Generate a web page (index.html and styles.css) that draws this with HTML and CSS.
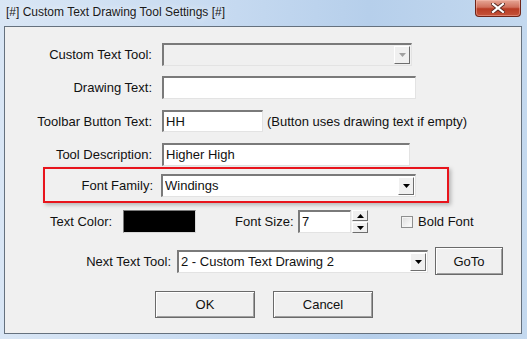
FILE: index.html
```html
<!DOCTYPE html>
<html lang="en">
<head>
  <meta charset="UTF-8">
  <meta name="viewport" content="width=device-width, initial-scale=1.0">
  <title>Custom Text Drawing Tool Settings</title>
  <link rel="stylesheet" href="styles.css">
</head>
<body>
  <div class="window">
    <div class="titlebar">
      <span class="title">[#] Custom Text Drawing Tool Settings [#]</span>
      <button class="close" aria-label="Close">
        <svg width="14" height="10" viewBox="0 0 14 10">
          <path d="M2 1 L12 9 M12 1 L2 9" stroke="#5a2a22" stroke-width="4" stroke-linecap="square"/>
          <path d="M2 1 L12 9 M12 1 L2 9" stroke="#ffffff" stroke-width="2.2" stroke-linecap="square"/>
        </svg>
      </button>
    </div>

    <div class="client">
      <div class="row row-tool">
        <label class="label">Custom Text Tool:</label>
        <div class="combo disabled w-tool">
          <span class="combo-text"></span>
          <span class="drop"><svg width="7" height="4" viewBox="0 0 7 4"><polygon points="0,0 7,0 3.5,4" fill="#a0a0a0"/></svg></span>
        </div>
      </div>

      <div class="row row-drawing">
        <label class="label">Drawing Text:</label>
        <div class="field w-drawing"></div>
      </div>

      <div class="row row-toolbar">
        <label class="label">Toolbar Button Text:</label>
        <div class="field w-toolbar">HH</div>
        <span class="note">(Button uses drawing text if empty)</span>
      </div>

      <div class="row row-desc">
        <label class="label">Tool Description:</label>
        <div class="field w-desc">Higher High</div>
      </div>

      <div class="highlight">
        <label class="label label-font">Font Family:</label>
        <div class="combo w-font">
          <span class="combo-text">Windings</span>
          <span class="drop"><svg width="7" height="4" viewBox="0 0 7 4"><polygon points="0,0 7,0 3.5,4" fill="#000"/></svg></span>
        </div>
      </div>

      <div class="row row-style">
        <label class="color-label">Text Color:</label>
        <div class="swatch"></div>
        <label class="size-label">Font Size:</label>
        <div class="field w-size">7</div>
        <div class="spin">
          <span class="spin-btn"><svg width="7" height="4" viewBox="0 0 7 4"><polygon points="0,4 7,4 3.5,0" fill="#000"/></svg></span>
          <span class="spin-btn"><svg width="7" height="4" viewBox="0 0 7 4"><polygon points="0,0 7,0 3.5,4" fill="#000"/></svg></span>
        </div>
        <span class="checkbox"></span>
        <span class="check-text">Bold Font</span>
      </div>

      <div class="row row-next">
        <label class="label label-next">Next Text Tool:</label>
        <div class="combo w-next">
          <span class="combo-text">2 - Custom Text Drawing 2</span>
          <span class="drop"><svg width="7" height="4" viewBox="0 0 7 4"><polygon points="0,0 7,0 3.5,4" fill="#000"/></svg></span>
        </div>
        <button class="button goto">GoTo</button>
      </div>

      <div class="row row-actions">
        <button class="button action ok">OK</button>
        <button class="button action cancel">Cancel</button>
      </div>
    </div>
  </div>
</body>
</html>
```

FILE: styles.css
```css
body {
  margin: 0;
  font-family: "Liberation Sans", Arial, sans-serif;
  font-size: 13px;
  color: #111;
}

.window {
  width: 527px;
  height: 339px;
  box-sizing: border-box;
  padding: 0 5px 5px 4px;
  display: flex;
  flex-direction: column;
  background: linear-gradient(to right, #d9e6f5, #c8dbf1 40%, #b6cfeb 70%, #c4d9ef);
}

.titlebar {
  height: 26px;
  display: flex;
  justify-content: space-between;
  align-items: flex-start;
}

.title {
  margin: 5px 0 0 2px;
  font-size: 12px;
  color: #1a1a1a;
  text-shadow: 0 0 6px rgba(255, 255, 255, 0.9);
}

.close {
  width: 46px;
  height: 17px;
  margin-right: 1px;
  padding: 0;
  border: 1px solid #6e2418;
  border-top: none;
  border-radius: 0 0 4px 4px;
  background: linear-gradient(#e6a796, #d0705c 45%, #b83c24 55%, #c5533a);
  box-shadow: inset 0 0 0 1px rgba(255, 200, 190, 0.4);
  display: flex;
  align-items: center;
  justify-content: center;
}

.client {
  flex: 1;
  background: #f0f0f0;
  border: 1px solid #65717e;
  display: flex;
  flex-direction: column;
}

.row {
  display: flex;
  align-items: center;
}

.label {
  width: 147px;
  margin-right: 10px;
  text-align: right;
  white-space: nowrap;
}

.row-tool { margin-top: 16px; height: 23px; }
.row-drawing { margin-top: 10px; height: 23px; }
.row-toolbar { margin-top: 11px; height: 22px; }
.row-desc { margin-top: 11px; height: 23px; }

.field,
.combo {
  box-sizing: border-box;
  height: 23px;
  background: #fff;
  border-style: solid;
  border-width: 2px 1px 1px 2px;
  border-color: #7a7a7a #e3e3e3 #e3e3e3 #7a7a7a;
  padding: 0 2px;
  line-height: 19px;
  white-space: nowrap;
}

.w-drawing { width: 254px; }
.w-toolbar { width: 101px; height: 22px; line-height: 19px; }
.w-desc { width: 248px; }

.note {
  margin-left: 4px;
}

.combo {
  display: flex;
  padding: 0 1px 0 2px;
}

.combo-text {
  flex: 1;
  overflow: hidden;
}

.drop {
  width: 16px;
  margin: 1px 0;
  box-sizing: border-box;
  background: #f0f0f0;
  border-style: solid;
  border-width: 1px;
  border-color: #ffffff #6e6e6e #6e6e6e #ffffff;
  display: flex;
  align-items: center;
  justify-content: center;
}

.combo.disabled {
  background: #f0f0f0;
}

.w-tool { width: 250px; }
.w-font { width: 255px; }
.w-next { width: 251px; }

.highlight {
  margin: 1px 0 0 38px;
  width: 406px;
  height: 36px;
  box-sizing: border-box;
  border: 2px solid #e8141c;
  box-shadow: 2px 2px 4px rgba(0, 0, 0, 0.25);
  display: flex;
  align-items: flex-start;
  padding-top: 5px;
}

.label-font {
  width: 108px;
  margin-right: 8px;
  line-height: 23px;
}

.row-style {
  margin-top: 7px;
  height: 23px;
}

.color-label {
  width: 65px;
  margin: 0 8px 0 45px;
  white-space: nowrap;
}

.swatch {
  width: 73px;
  height: 23px;
  box-sizing: border-box;
  background: #000;
  border-style: solid;
  border-width: 1px;
  border-color: #7a7a7a #d8d8d8 #d8d8d8 #7a7a7a;
}

.size-label {
  width: 57px;
  margin: 0 6px 0 39px;
  white-space: nowrap;
}

.w-size {
  width: 53px;
}

.spin {
  margin-left: 1px;
  width: 16px;
  height: 23px;
  display: flex;
  flex-direction: column;
  gap: 1px;
}

.spin-btn {
  flex: 1;
  box-sizing: border-box;
  background: #f0f0f0;
  border-style: solid;
  border-width: 1px;
  border-color: #ffffff #6e6e6e #6e6e6e #ffffff;
  display: flex;
  align-items: center;
  justify-content: center;
}

.checkbox {
  width: 12px;
  height: 12px;
  margin-left: 33px;
  box-sizing: border-box;
  border: 1px solid #8e8f8f;
  background: linear-gradient(135deg, #dcdcdc, #ffffff);
  box-shadow: inset 0 0 0 1px #f4f4f4;
}

.check-text {
  margin-left: 5px;
}

.row-next {
  margin-top: 14px;
  height: 28px;
}

.label-next {
  width: 166px;
  margin-right: 6px;
}

.button {
  font-family: inherit;
  font-size: 13px;
  color: #111;
  background: #f0f0f0;
  border: 1px solid #6a6a6a;
  box-shadow: inset 1px 1px 0 #ffffff, inset -1px -1px 0 #a0a0a0;
  padding: 0;
}

.goto {
  margin-left: 7px;
  width: 68px;
  height: 28px;
}

.row-actions {
  margin-top: 16px;
  height: 27px;
}

.action {
  width: 100px;
  height: 27px;
}

.ok { margin-left: 150px; }
.cancel { margin-left: 18px; }
```
